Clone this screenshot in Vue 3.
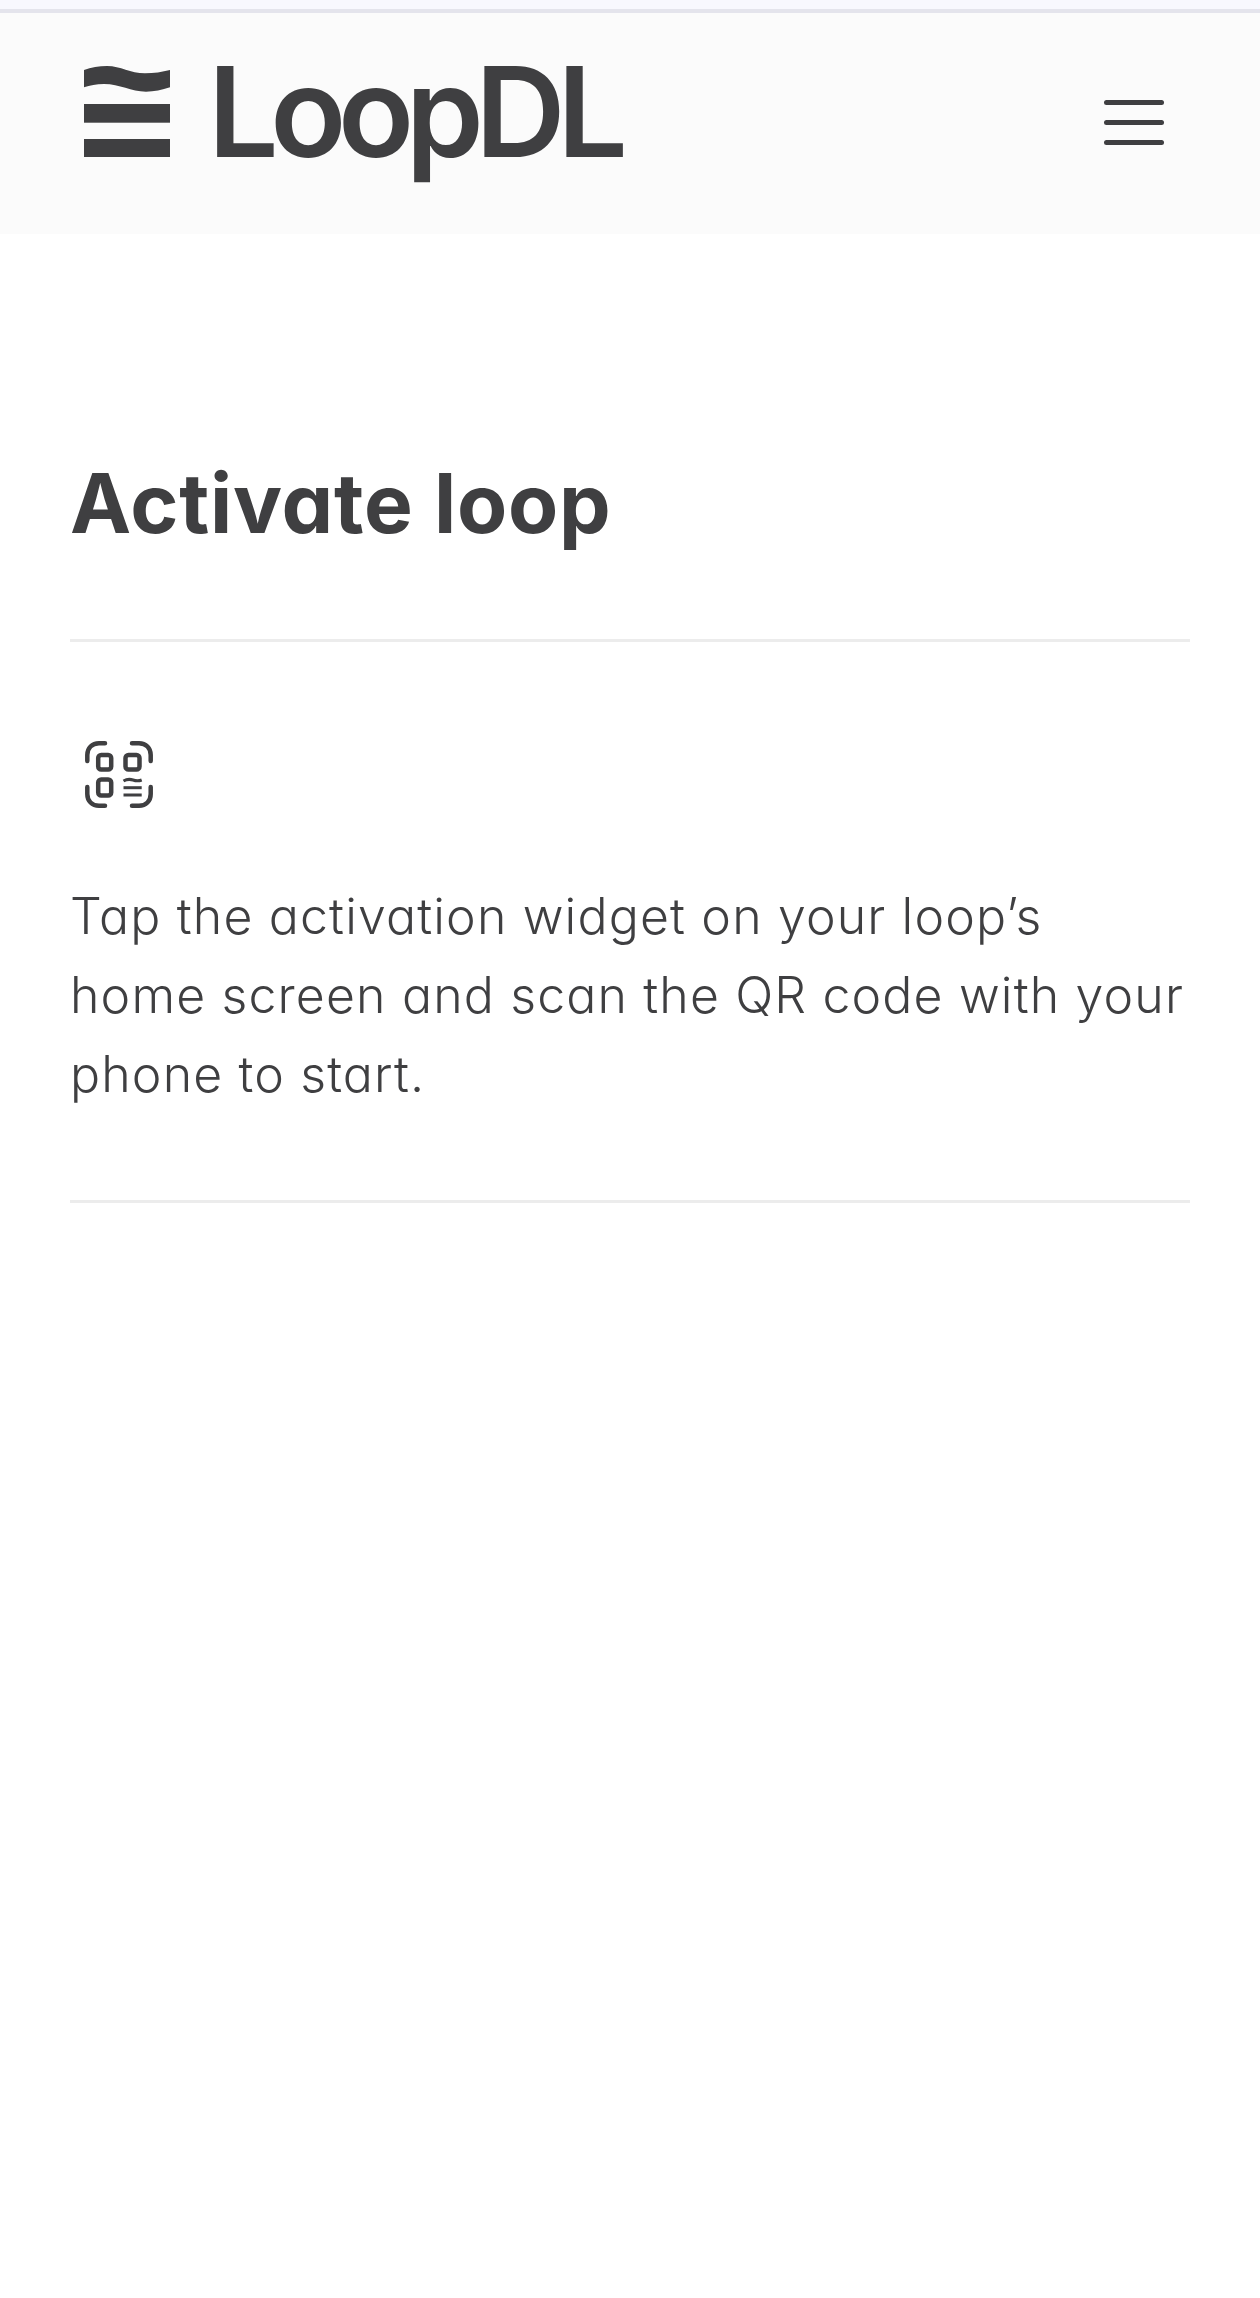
<script setup>
const lines = ['Tap the activation widget on your loop’s', 'home screen and scan the QR code with your', 'phone to start.']
</script>

<template>
  <div class="page">
    <div class="status"></div>
    <header class="header">
      <div class="brand">
        <svg class="mark" viewBox="0 0 86 91" aria-hidden="true">
          <path d="M0 4C7 1.5 15 0 23 0C37 0 46 7.3 61 7.3C70 7.3 78 6 86 4V21.3C78 24 70 25.7 62 25.7C47 25.7 36 18 20 18C12 18 6 19.5 0 21.3Z" />
          <rect x="0" y="38" width="86" height="18.7" />
          <rect x="0" y="73" width="86" height="18" />
        </svg>
        <span class="wordmark">LoopDL</span>
      </div>
      <button class="menu" aria-label="Menu"><span></span><span></span><span></span></button>
    </header>
    <main class="content">
      <h1>Activate loop</h1>
      <hr />
      <svg class="scan" viewBox="0 0 68 67" aria-hidden="true">
        <g fill="none" stroke="currentColor" stroke-width="4.5" stroke-linecap="round">
          <path d="M2.3 20V14C2.3 7 7 2.3 14 2.3H20" />
          <path d="M47 2.3H54C61 2.3 65.7 7 65.7 14V20" />
          <path d="M2.3 46V53C2.3 60 7 64.7 14 64.7H20" />
          <path d="M65.7 46V53C65.7 60 61 64.7 54 64.7H47" />
          <rect x="13.2" y="14" width="13" height="14.5" rx="3" />
          <rect x="40.5" y="14" width="14" height="14.5" rx="3" />
          <rect x="13.2" y="38.5" width="13" height="16" rx="3" />
        </g>
        <g fill="none" stroke="currentColor" stroke-width="3">
          <path d="M38.5 40C42 38 45 38 48 39C51 40 54 40 56.7 39" />
          <path d="M38.5 46.7H56.7" />
          <path d="M38.5 54H56.7" />
        </g>
      </svg>
      <p><span v-for="l in lines" :key="l" class="line">{{ l }}</span></p>
      <hr />
    </main>
  </div>
</template>

<style>
body { margin: 0; background: #fff; }
</style>

<style scoped>
.page { min-height: 2298px; background: #fff; color: #3f3f41; font-family: "Inter", "Liberation Sans", sans-serif; font-feature-settings: "cv11" 1; }
.status { height: 9px; background: #f8f8fe; border-bottom: 4px solid #e4e4ec; }
.header { height: 221px; box-sizing: border-box; background: #fbfbfb; display: flex; align-items: flex-start; justify-content: space-between; padding: 0 96px 0 84px; }
.brand { display: flex; align-items: baseline; gap: 38px; margin-top: 36px; }
.mark { width: 86px; height: 91px; fill: #3f3f41; }
.wordmark { font-size: 125px; font-weight: 600; line-height: 1; letter-spacing: -8.4px; }
.menu { background: none; border: 0; padding: 0; margin-top: 87px; width: 60px; display: flex; flex-direction: column; gap: 15px; }
.menu span { height: 5px; border-radius: 3px; background: #3f3f41; }
.content { padding: 0 70px; }
h1 { margin: 0; padding: 221px 0 86px; font-size: 82px; line-height: 98px; font-weight: 700; letter-spacing: .8px; }
hr { margin: 0; border: 0; border-top: 3px solid #ececec; }
.scan { display: block; width: 68px; height: 67px; margin: 99px 0 0 15px; }
p { margin: 69px 0 86px; font-size: 50px; line-height: 79px; font-weight: 300; letter-spacing: 1.15px; }
.line { display: block; white-space: nowrap; }
</style>
